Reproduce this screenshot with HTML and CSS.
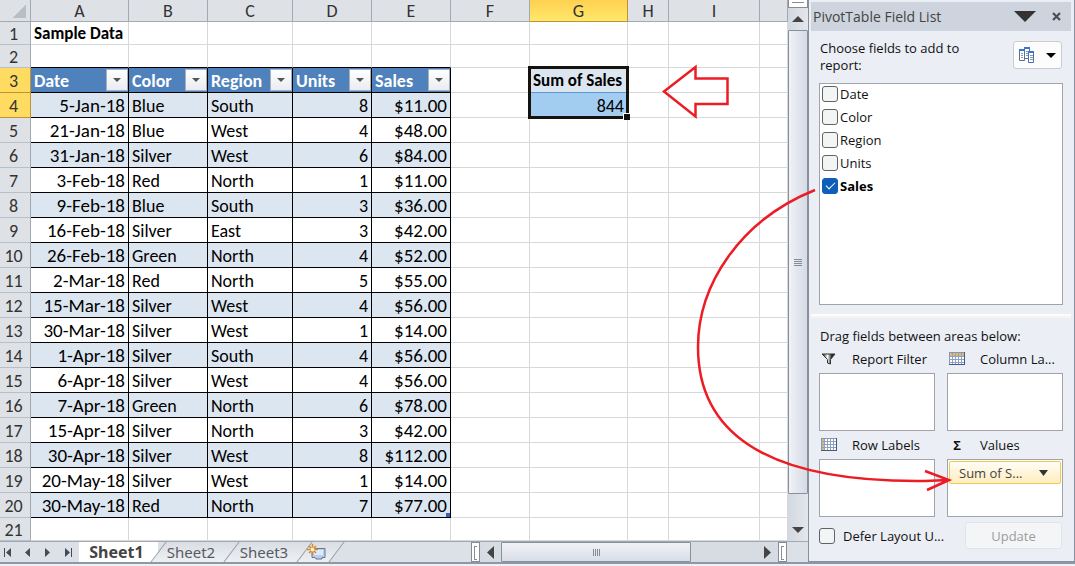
FILE: index.html
```html
<!DOCTYPE html>
<html lang="en">
<head>
<meta charset="utf-8">
<title>Sample Data</title>
<link rel="stylesheet" href="styles.css">
</head>
<body>
<div class="app">
  <div class="main">
    <section class="book">
      <div class="view">
        <table class="grid">
          <colgroup><col class="w-head"><col class="w-date"><col class="w-text"><col class="w-region"><col class="w-text"><col class="w-text"><col class="w-text"><col class="w-date"><col class="w-small"><col class="w-wide"><col></colgroup>
          <thead>
            <tr class="letters"><th class="corner"></th><th>A</th><th>B</th><th>C</th><th>D</th><th>E</th><th>F</th><th class="picked">G</th><th>H</th><th>I</th><th></th></tr>
          </thead>
          <tbody id="rows"></tbody>
        </table>
        <div class="vscroll">
          <div class="split-top"></div>
          <button class="scroll-btn" aria-label="Scroll up"><svg width="12" height="6"><path d="M6 0 12 6H0z"/></svg></button>
          <div class="vthumb"><i></i><i></i><i></i><i></i></div>
          <button class="scroll-btn down" aria-label="Scroll down"><svg width="12" height="6"><path d="M0 0H12L6 6z"/></svg></button>
        </div>
      </div>
      <div class="tabbar">
        <div class="nav">
          <button aria-label="First sheet"><svg width="8" height="9"><path d="M0 0h1v9H0zM7 0v9L2 4.500z"/></svg></button>
          <button aria-label="Previous sheet"><svg width="8" height="9"><path d="M6 0v9L1 4.500z"/></svg></button>
          <button aria-label="Next sheet"><svg width="8" height="9"><path d="M1 0v9l5-4.500z"/></svg></button>
          <button aria-label="Last sheet"><svg width="8" height="9"><path d="M7 0h1v9H7zM1 0v9l5-4.500z"/></svg></button>
        </div>
        <button class="tab active">Sheet1</button>
        <button class="tab"><span>Sheet2</span></button>
        <button class="tab"><span>Sheet3</span></button>
        <button class="tab new" aria-label="Insert sheet"><svg width="20" height="17" viewBox="0 0 20 17"><path d="M5 4.500h13v9h-3v1.500H9l-1-1.500H5z" fill="#b9cdec" stroke="#66779b"/><path d="M7 6h9v5H7z" fill="#dfeafa"/><path d="M5.500 0v11M0 5.500h11M2 2l7 7M9 2 2 9" stroke="#d98727" stroke-width="1.500"/><circle cx="5.500" cy="5.500" r="2" fill="#fff1bd"/></svg></button>
        <div class="fill"></div>
        <div class="split"></div>
        <div class="hscroll">
          <button class="scroll-btn" aria-label="Scroll left"><svg width="7" height="13"><path d="M7 0v13L0 6.500z"/></svg></button>
          <div class="hthumb"><i></i><i></i><i></i><i></i></div>
          <button class="scroll-btn right" aria-label="Scroll right"><svg width="7" height="13"><path d="M0 0v13l7-6.500z"/></svg></button>
        </div>
        <div class="split"></div>
        <div class="end"></div>
      </div>
    </section>

    <aside class="panel">
      <header class="title">
        <h2>PivotTable Field List</h2>
        <button aria-label="Options"><svg width="22" height="11"><path d="M0 0h22L11 11z" fill="#333"/></svg></button>
        <button aria-label="Close"><svg width="9" height="9"><path d="m1 1 7 7M8 1 1 8" stroke="#4b4f55" stroke-width="2.200"/></svg></button>
      </header>
      <div class="choose">
        <p>Choose fields to add to report:</p>
        <button class="layout" aria-label="Field list layout">
          <svg width="16" height="16" viewBox="0 0 16 16" fill="#fff" stroke="#56719f"><path d="M.5 2.500h5v11h-5z"/><path d="M5.500.500h5v11h-5z"/><path d="M9.500 4.500h5v11h-5z"/><path d="M0 3h5M5 1h6M9 5h6" stroke="#3976d4" stroke-width="2"/><path d="M2 6.500h2M2 8.500h2M2 10.500h2M7 4.500h2M7 6.500h2M7 8.500h2M11 8.500h3M11 10.500h3M11 12.500h3" stroke="#7f98c0"/></svg>
          <svg width="10" height="5"><path d="M0 0h10L5 5z"/></svg>
        </button>
      </div>
      <div class="fields">
        <label><input type="checkbox">Date</label>
        <label><input type="checkbox">Color</label>
        <label><input type="checkbox">Region</label>
        <label><input type="checkbox">Units</label>
        <label class="on"><input type="checkbox" checked>Sales</label>
      </div>
      <div class="divider"></div>
      <p class="drag">Drag fields between areas below:</p>
      <div class="areas">
        <div class="area">
          <h3><svg width="16" height="14" viewBox="0 0 16 14"><defs><linearGradient id="fg"><stop offset=".15" stop-color="#555"/><stop offset=".42" stop-color="#fff"/><stop offset=".75" stop-color="#222"/></linearGradient></defs><path d="M1 2h13L9.500 7.500V12l-3-1V7.500z" fill="url(#fg)" stroke="#333"/></svg><span>Report Filter</span></h3>
          <div class="drop"></div>
        </div>
        <div class="area">
          <h3><svg width="16" height="14" viewBox="0 0 16 14"><path d="M0 0h16v13H0z" fill="#8196ba"/><path d="M1 1h14v3H1z" fill="#e3b965"/><path d="M1 4h14v8H1z" fill="#fff"/><path d="M0 4.500h16M0 7.500h16M0 10.500h16M3.500 1v12M6.500 1v12M9.500 1v12M12.500 1v12" stroke="#8ea1c3"/><path d="M0 12.500h16M15.500 0v13" stroke="#425a85"/></svg><span>Column La...</span></h3>
          <div class="drop"></div>
        </div>
        <div class="area">
          <h3><svg width="16" height="14" viewBox="0 0 16 14"><path d="M0 0h16v13H0z" fill="#8196ba"/><path d="M1 1h3v11H1z" fill="#e3b965"/><path d="M4 1h11v11H4z" fill="#fff"/><path d="M0 3.500h16M0 6.500h16M0 9.500h16M3.500 1v12M6.500 1v12M9.500 1v12M12.500 1v12" stroke="#8ea1c3"/><path d="M0 12.500h16M15.500 0v13" stroke="#425a85"/></svg><span>Row Labels</span></h3>
          <div class="drop"></div>
        </div>
        <div class="area">
          <h3><b>Σ</b><span>Values</span></h3>
          <div class="drop"><button class="chip"><span>Sum of S...</span><svg width="9" height="6"><path d="M0 0h9L4.500 6z"/></svg></button></div>
        </div>
      </div>
      <div class="defer">
        <label><input type="checkbox"><span>Defer Layout U...</span></label>
        <button disabled>Update</button>
      </div>
    </aside>
  </div>
  <footer class="status"></footer>
  <svg class="notes" width="1075" height="566" fill="none" stroke="#ed1c24" stroke-width="2.500"><path d="M664 91.500 695.500 67v11.500h32V104h-32v12.500z"/><path d="M815 190C740 220 698 285 698 347 698 427 757 483 925 481L948 480M925 471l24 9-22 10"/></svg>
</div>
<script src="script.js"></script>
</body>
</html>
```
FILE: styles.css
```css
* { box-sizing: border-box; }
body { margin: 0; background: #fff; font-family: "Open Sans", sans-serif; font-size: 13px; color: #111; }
button { border: 0; padding: 0; background: none; font: inherit; color: inherit; }
svg { display: block; flex: none; }
p, h2, h3 { margin: 0; font-weight: 400; }
.app { position: relative; min-height: 100vh; display: flex; flex-direction: column; overflow: hidden; }
.main { display: grid; grid-template-columns: minmax(0, 1fr) 267px; flex: 1; }
.book { display: flex; flex-direction: column; }
.view { display: flex; flex: 1; }

/* worksheet */
.grid { flex: 1; width: 0; table-layout: fixed; border-collapse: separate; border-spacing: 0; font-family: Carlito, Lato, sans-serif; font-size: 18px; line-height: 20px; color: #000; }
.w-head { width: 31px; }
.w-date { width: 98px; }
.w-text { width: 79px; }
.w-region { width: 85px; }
.w-small { width: 41px; }
.w-wide { width: 91px; }
.grid th, .grid td { padding: 2px 3px 0; height: 25px; border-right: 1px solid #d6d8da; border-bottom: 1px solid #d6d8da; text-align: left; white-space: nowrap; }
.grid .letters th { height: 22px; padding: 0; border-color: #a3a9b0; background: #dee2e7; font-weight: 400; text-align: center; color: #333; }
.grid .letters .picked { background: linear-gradient(#ffd04f, #ffe96c); border-color: #c39135; }
.grid .letters .corner { background: linear-gradient(135deg, #dee2e7 50%, #b9bec5 50%) 12px 4px / 14px 14px no-repeat #dee2e7; }
.grid tbody .num { padding: 2px 3px 0 0; background: #dee2e7; border-color: #a3a9b0; border-bottom-color: #b9bfc6; font-weight: 400; text-align: center; color: #333; }
.grid tbody .num.picked { background: #ffdc61; border-color: #c39135; }
.grid .short .num, .grid .short td { height: 23px; padding-top: 1px; }
.grid .above { border-bottom-color: #000; }
.grid .data, .grid .label { border-color: #000; }
.grid .band { background: #dce6f1; }
.grid .right { text-align: right; }
.grid .long { font-size: 19px; }
.grid b, .grid .sum { font-size: 17px; }
.grid .label { background: #4f81bd; padding: 0; color: #fff; font-weight: 700; }
.label div { display: flex; align-items: center; justify-content: space-between; padding-left: 3px; }
.label span { padding-top: 2px; }
.filter { width: 22px; height: 22px; display: grid; place-items: center; border: 1px solid #a9b0b9; background: linear-gradient(#fff, #e9ecf1); fill: #555; }
.grid .sum { position: relative; font-weight: 700; background: #dce6f1; border-bottom-color: #5b9bd5; }
.grid .total { background: #a2cdf0; }
.outline { position: absolute; z-index: 1; left: -2px; top: -2px; width: 101px; height: 53px; border: 3px solid #16130f; }
.outline::after { content: ""; position: absolute; right: -4px; bottom: -4px; width: 6px; height: 6px; background: #111; border-left: 1px solid #fff; border-top: 1px solid #fff; }
.grid .last { background: linear-gradient(#3f5fb0, #3f5fb0) right bottom / 4px 4px no-repeat #dce6f1; }

/* scrollbars */
.scroll-btn { display: grid; place-items: center; fill: #444; }
.vscroll { width: 20px; display: flex; flex-direction: column; background: linear-gradient(90deg, #d3d8e0, #e3e7ec); }
.split-top { height: 8px; border: 1px solid #858c95; border-top: 0; background: linear-gradient(#858c95, #858c95) center 2px / 12px 1px no-repeat #fff; }
.vscroll .scroll-btn { height: 22px; }
.vscroll .down { height: 22px; margin-top: 25px; }
.vthumb { flex: 1; display: flex; flex-direction: column; align-items: center; justify-content: center; gap: 1px; border: 1px solid #87909d; border-radius: 1px; background: linear-gradient(90deg, #f0f2f6, #d5dae4); }
.vthumb i { width: 8px; height: 1px; background: #858b94; }
.tabbar { height: 21px; display: flex; background: #dce1e8; border-top: 1px solid #a3a9b0; }
.nav { width: 79px; display: flex; align-items: center; justify-content: space-between; padding: 0 7px 0 4px; fill: #444b58; }
.tab { position: relative; z-index: 0; width: 73px; padding-right: 7px; font-size: 15px; line-height: 19px; color: #555b64; font-family: "Noto Sans", sans-serif; }
.tab::before { content: ""; position: absolute; z-index: -1; inset: 0; transform: skewX(-37deg); background: linear-gradient(#d9dee4, #eef0f3); border-left: 1px solid #8e959e; }
.tab.active { width: 79px; padding-right: 4px; background: #fff; font-size: 16px; font-weight: 700; color: #444; }
.tab.active::before { content: none; }
.tab.new { width: 33px; display: grid; place-items: center; }
.tab.new::before { border-right: 1px solid #8e959e; }
.fill { flex: 1; }
.split { width: 9px; border: 1px solid #858c95; background: #fff; padding: 3px 2px; }
.split::after { content: ""; display: block; height: 12px; border: 1px solid #858c95; border-right: 0; }
.hscroll { width: 298px; display: flex; background: #d7dce3; }
.hscroll .scroll-btn { width: 21px; }
.hscroll .right { margin-left: auto; }
.hthumb { width: 190px; display: flex; align-items: center; justify-content: center; gap: 1px; border: 1px solid #87909d; border-radius: 1px; background: linear-gradient(#f0f2f6, #d9dee7); }
.hthumb i { width: 1px; height: 7px; background: #858b94; }
.end { width: 21px; }

/* field list */
.panel { display: flex; flex-direction: column; padding: 2px 3px 12px 2px; background: #ebeef4; border: 1px solid #87909b; border-top: 0; }
.title { height: 29px; display: flex; align-items: center; gap: 16px; padding: 0 10px 0 2px; background: #cdd4dd; }
.title h2 { flex: 1; font-size: 14px; color: #444; }
.choose { display: flex; justify-content: space-between; align-items: flex-start; padding: 9px 9px 0 9px; height: 52px; }
.choose p { width: 160px; line-height: 17px; }
.layout { width: 49px; height: 28px; margin-top: 1px; display: flex; align-items: center; justify-content: center; gap: 11px; border: 1px solid #c9cbd0; border-radius: 3px; background: #fcfcfd; }
.fields { flex: 1; margin: 0 8px; padding: 0 2px; background: #fff; border: 1px solid #9fa3aa; }
.fields label { height: 23px; padding-bottom: 3px; display: flex; align-items: center; gap: 2px; }
.fields .on { font-weight: 700; color: #000; }
input { appearance: none; flex: none; width: 16px; height: 16px; margin: 0; border: 1px solid #5f6266; border-radius: 3px; background: #f3f5f5; }
input:checked { border-color: #0f5fb8; background: #0f5fb8; display: grid; place-items: center; }
input:checked::after { content: ""; width: 8px; height: 4px; margin-bottom: 3px; border: solid #fff; border-width: 0 0 1px 1px; transform: rotate(-45deg); }
.divider { height: 5px; margin-top: 9px; background: linear-gradient(#fff, #eee); }
.drag { padding: 8px 0 0 9px; line-height: 18px; }
.areas { display: grid; grid-template-columns: 1fr 1fr; column-gap: 12px; padding: 0 8px; }
.area { min-width: 0; }
.area h3 { height: 28px; display: flex; align-items: center; gap: 15px; padding-left: 2px; font-size: 13px; }
.area h3 b { width: 16px; text-align: center; }
.area span, .defer span { white-space: nowrap; }
.drop { height: 58px; padding: 1px; background: #fff; border: 1px solid #9fa3aa; }
.chip { width: 100%; height: 23px; display: flex; align-items: center; justify-content: space-between; padding: 0 12px 0 9px; border: 1px solid #efcb4b; border-radius: 2px; background: linear-gradient(#fffdf6, #ffedbd); color: #444; fill: #333; }
.defer { display: flex; justify-content: space-between; align-items: center; padding: 5px 9px 0 8px; }
.defer label { display: flex; align-items: center; gap: 8px; }
.defer button { width: 97px; height: 27px; border: 1px solid #e2e5e7; border-radius: 3px; background: #f3f5f6; color: #9b9da1; }
.status { height: 4px; border-top: 2px solid #8d98a6; background: #eef0f3; }
.notes { position: absolute; top: 0; left: 0; pointer-events: none; }
```
FILE: script.js
```js
const sales = [
  ["5-Jan-18", "Blue", "South", 8, 11], ["21-Jan-18", "Blue", "West", 4, 48],
  ["31-Jan-18", "Silver", "West", 6, 84], ["3-Feb-18", "Red", "North", 1, 11],
  ["9-Feb-18", "Blue", "South", 3, 36], ["16-Feb-18", "Silver", "East", 3, 42],
  ["26-Feb-18", "Green", "North", 4, 52], ["2-Mar-18", "Red", "North", 5, 55],
  ["15-Mar-18", "Silver", "West", 4, 56], ["30-Mar-18", "Silver", "West", 1, 14],
  ["1-Apr-18", "Silver", "South", 4, 56], ["6-Apr-18", "Silver", "West", 4, 56],
  ["7-Apr-18", "Green", "North", 6, 78], ["15-Apr-18", "Silver", "North", 3, 42],
  ["30-Apr-18", "Silver", "West", 8, 112], ["20-May-18", "Silver", "West", 1, 14],
  ["30-May-18", "Red", "North", 7, 77]
];
const td = (n) => "<td></td>".repeat(n);
const head = (n, c = "") => `<th class="num ${c}">${n}</th>`;
const labels = ["Date", "Color", "Region", "Units", "Sales"].map((t) =>
  `<th class="label"><div><span>${t}</span><button class="filter" aria-label="Filter ${t}"><svg width="8" height="4"><path d="M0 0h8L4 4z"/></svg></button></div></th>`).join("");

let html = `<tr class="short">${head(1)}<td><b>Sample Data</b></td>${td(9)}</tr>`;
html += `<tr class="short">${head(2)}${'<td class="above"></td>'.repeat(5)}${td(5)}</tr>`;
html += `<tr>${head(3, "picked")}${labels}<td></td><td class="sum">Sum of Sales<span class="outline"></span></td>${td(3)}</tr>`;
sales.forEach((row, i) => {
  const band = i % 2 ? "" : "band";
  const cells = row.map((v, c) => {
    const right = c === 0 || c > 2 ? "right" : "";
    const long = c === 0 || c === 4 ? "long" : "";
    const last = i === sales.length - 1 && c === 4 ? "last" : "";
    return `<td class="data ${band} ${right} ${long} ${last}">${c === 4 ? "$" + v.toFixed(2) : v}</td>`;
  }).join("");
  const rest = i ? td(5) : `<td></td><td class="total right">844</td>${td(3)}`;
  html += `<tr>${head(i + 4, i ? "" : "picked")}${cells}${rest}</tr>`;
});
html += `<tr class="short">${head(21)}${td(10)}</tr>`;
document.getElementById("rows").innerHTML = html;
```
